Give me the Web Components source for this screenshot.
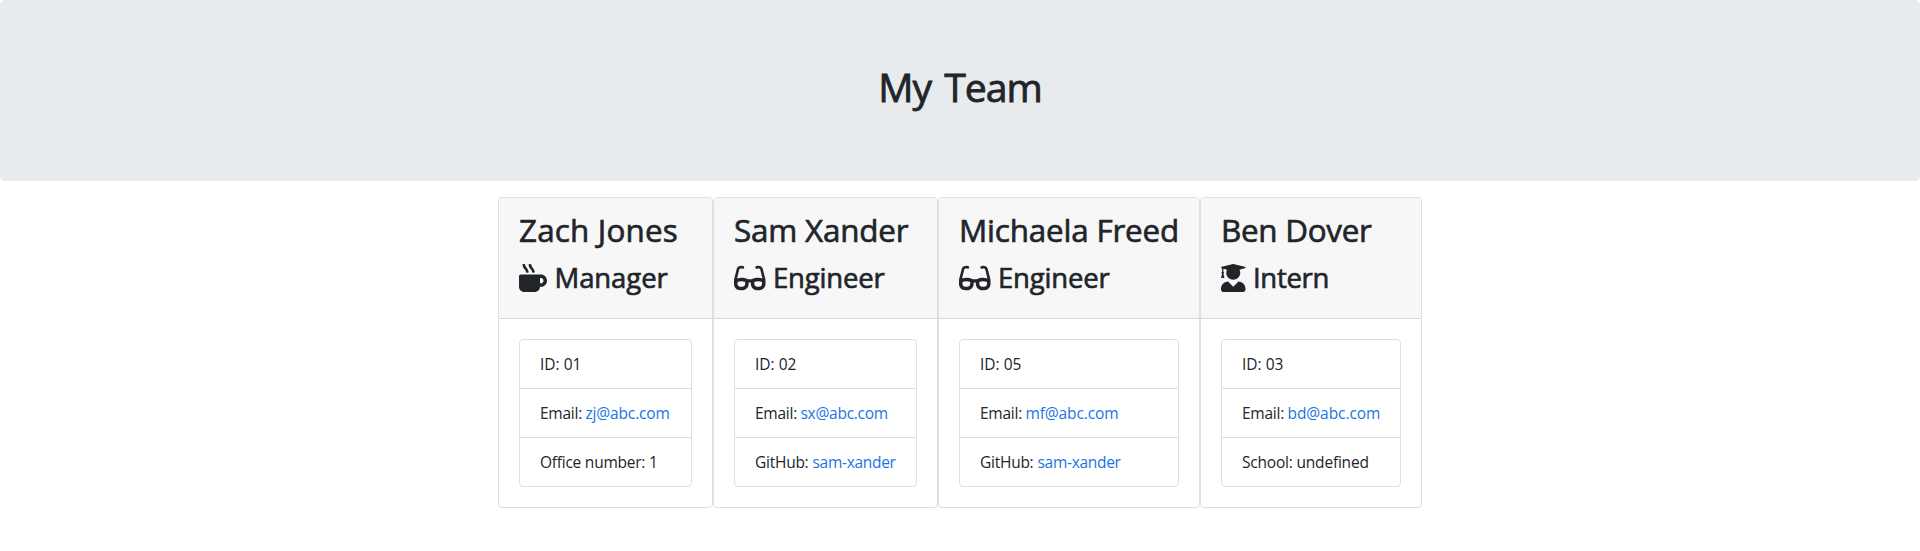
<!DOCTYPE html>
<html lang="en">
<head>
<meta charset="utf-8">
<title>My Team</title>
<style>
body{margin:0;background:#fff;color:#212529;font:400 15.5px/24px "Open Sans","Noto Sans",sans-serif}
</style>
</head>
<body>
<team-banner>My Team</team-banner>
<team-board>
  <member-card style="width:215px" icon="mug" name-spacing="0.2px" role-spacing="-0.09px">
    <span slot="name">Zach Jones</span><span slot="role">Manager</span>
    <info-row spacing="0px">ID: 01</info-row>
    <info-row label="Email:" label-width="45.5px" link spacing="-0.16px">zj@abc.com</info-row>
    <info-row spacing="-0.24px">Office number: 1</info-row>
  </member-card>
  <member-card style="width:225px" icon="glasses" name-spacing="-0.2px" role-spacing="-0.18px">
    <span slot="name">Sam Xander</span><span slot="role">Engineer</span>
    <info-row spacing="0px">ID: 02</info-row>
    <info-row label="Email:" label-width="45.5px" link spacing="-0.27px">sx@abc.com</info-row>
    <info-row label="GitHub:" label-width="57.5px" link spacing="-0.3px">sam-xander</info-row>
  </member-card>
  <member-card style="width:262px" icon="glasses" name-spacing="-0.18px" role-spacing="-0.18px">
    <span slot="name">Michaela Freed</span><span slot="role">Engineer</span>
    <info-row spacing="0px">ID: 05</info-row>
    <info-row label="Email:" label-width="45.5px" link spacing="-0.13px">mf@abc.com</info-row>
    <info-row label="GitHub:" label-width="57.5px" link spacing="-0.3px">sam-xander</info-row>
  </member-card>
  <member-card style="width:222px" icon="graduate" name-spacing="-0.28px" role-spacing="-0.31px">
    <span slot="name">Ben Dover</span><span slot="role">Intern</span>
    <info-row spacing="0px">ID: 03</info-row>
    <info-row label="Email:" label-width="45.5px" link spacing="-0.08px">bd@abc.com</info-row>
    <info-row spacing="-0.2px">School: undefined</info-row>
  </member-card>
</team-board>
<script>
const ICONS = {
  mug: [512, 'M127.1 146.5c1.3 7.7 8 13.5 16 13.5h16.5c9.8 0 17.6-8.5 16.3-18-3.8-28.2-16.4-54.2-36.6-74.7-14.4-14.7-23.6-33.3-26.4-53.5C111.8 5.9 105 0 96.8 0H80.4C70.6 0 63 8.5 64.1 18c3.9 31.9 18 61.3 40.6 84.4 12 12.2 19.7 27.5 22.4 44.1zm112 0c1.3 7.7 8 13.5 16 13.5h16.5c9.8 0 17.6-8.5 16.3-18-3.8-28.2-16.4-54.2-36.6-74.7-14.4-14.7-23.6-33.3-26.4-53.5C223.8 5.9 217 0 208.8 0h-16.4c-9.8 0-17.5 8.5-16.3 18 3.9 31.9 18 61.3 40.6 84.4 12 12.2 19.7 27.5 22.4 44.1zM400 192H32c-17.7 0-32 14.3-32 32v192c0 53 43 96 96 96h192c53 0 96-43 96-96h16c61.8 0 112-50.2 112-112s-50.2-112-112-112zm0 160h-16v-96h16c26.5 0 48 21.5 48 48s-21.5 48-48 48z'],
  glasses: [576, 'M574.1 280.37L528.75 98.66c-5.91-23.7-21.59-44.05-43-55.81-21.44-11.73-46.97-14.11-70.19-6.33l-15.25 5.08c-8.39 2.79-12.92 11.86-10.12 20.24l5.06 15.18c2.79 8.38 11.85 12.91 20.23 10.12l13.18-4.39c10.87-3.62 23-3.57 33.16 1.73 10.29 5.37 17.57 14.56 20.37 25.82l38.46 153.82c-22.19-6.81-49.79-12.46-81.2-12.46-34.77 0-73.98 7.02-114.85 26.74h-73.18c-40.87-19.74-80.08-26.75-114.86-26.75-31.42 0-59.02 5.65-81.21 12.46l38.46-153.83c2.79-11.25 10.09-20.45 20.38-25.81 10.16-5.3 22.28-5.35 33.15-1.73l13.17 4.39c8.38 2.79 17.44-1.74 20.23-10.12l5.06-15.18c2.8-8.38-1.73-17.45-10.12-20.24l-15.25-5.08c-23.22-7.78-48.75-5.41-70.19 6.33-21.41 11.77-37.09 32.11-43 55.8L1.9 280.37A64.218 64.218 0 0 0 0 295.86v70.25C0 429.01 51.58 480 115.2 480h37.12c60.28 0 110.37-45.94 114.88-105.37l2.93-38.63h35.75l2.93 38.63C313.31 434.06 363.4 480 423.68 480h37.12c63.62 0 115.2-50.99 115.2-113.88v-70.25c0-5.23-.64-10.43-1.9-15.5zm-370.72 89.42c-1.97 25.91-24.4 46.21-51.06 46.21H115.2C86.97 416 64 393.62 64 366.11v-37.54c18.12-6.49 43.42-12.92 72.58-12.92 23.86 0 47.26 4.33 69.93 12.92l-3.13 41.22zM512 366.12c0 27.51-22.97 49.88-51.2 49.88h-37.12c-26.67 0-49.1-20.3-51.06-46.21l-3.13-41.22c22.67-8.59 46.08-12.92 69.95-12.92 29.12 0 54.43 6.44 72.55 12.93v37.54z'],
  graduate: [448, 'M319.4 320.6L224 416l-95.4-95.4C57.1 323.7 0 382.2 0 454.4v9.6c0 26.5 21.5 48 48 48h352c26.5 0 48-21.5 48-48v-9.6c0-72.2-57.1-130.7-128.6-133.8zM13.6 79.8l6.4 1.5v58.4c-7 4.2-12 11.5-12 20.3 0 8.4 4.6 15.4 11.1 19.7L3.5 242c-1.7 6.9 2.1 14 7.6 14h41.8c5.5 0 9.3-7.1 7.6-14l-15.6-62.3C51.4 175.4 56 168.4 56 160c0-8.8-5-16.1-12-20.3V87.1l66 15.9c-8.6 17.2-14 36.4-14 57 0 70.7 57.3 128 128 128s128-57.3 128-128c0-20.6-5.3-39.8-14-57l96.3-23.2c18.2-4.4 18.2-27.1 0-31.5l-190.4-46c-13-3.1-26.7-3.1-39.7 0L13.6 48.2c-18.1 4.4-18.1 27.2 0 31.6z']
};

customElements.define('team-banner', class extends HTMLElement {
  constructor() {
    super();
    this.attachShadow({mode: 'open'}).innerHTML = `
      <style>
        :host{display:block;box-sizing:border-box;height:181px;padding-top:63px;margin-bottom:16px;background:#e7ebee;border-radius:5px;text-align:center}
        h1{margin:0;font-size:39.2px;line-height:48px;font-weight:500;letter-spacing:-1px;word-spacing:4px;-webkit-text-stroke:.8px}
      </style>
      <h1><slot></slot></h1>`;
  }
});

customElements.define('team-board', class extends HTMLElement {
  constructor() {
    super();
    this.attachShadow({mode: 'open'}).innerHTML = `
      <style>:host{display:flex;justify-content:center}</style><slot></slot>`;
  }
});

customElements.define('fa-icon', class extends HTMLElement {
  connectedCallback() {
    if (this.shadowRoot) return;
    const [w, d] = ICONS[this.getAttribute('name')];
    this.attachShadow({mode: 'open'}).innerHTML = `
      <style>:host{display:block;flex:none}svg{display:block;height:28px;width:${w / 512 * 28}px}</style>
      <svg viewBox="0 0 ${w} 512" fill="currentColor"><path d="${d}"/></svg>`;
  }
});

customElements.define('info-row', class extends HTMLElement {
  connectedCallback() {
    if (this.shadowRoot) return;
    const label = this.getAttribute('label');
    const tag = this.hasAttribute('link') ? 'a' : 'span';
    this.attachShadow({mode: 'open'}).innerHTML = `
      <style>
        :host{display:flex;padding:12px 0 12px 20px;height:24px;white-space:nowrap}
        :host(:not(:last-child)){border-bottom:1px solid #dfdfdf}
        .label{width:${this.getAttribute('label-width')};letter-spacing:-.25px}
        .value{letter-spacing:${this.getAttribute('spacing')}}
        a{color:#1b74e4;text-decoration:none}
      </style>
      ${label ? `<span class="label">${label}</span>` : ''}<${tag} class="value"><slot></slot></${tag}>`;
  }
});

customElements.define('member-card', class extends HTMLElement {
  connectedCallback() {
    if (this.shadowRoot) return;
    this.attachShadow({mode: 'open'}).innerHTML = `
      <style>
        :host{display:block;box-sizing:border-box;border:1px solid #dfdfdf;border-radius:4px;height:311px;overflow:hidden}
        header{box-sizing:border-box;height:121px;padding:13px 0 0 20px;background:#f7f7f7;border-bottom:1px solid #d8d8d8;white-space:nowrap}
        h2,h3{margin:0;font-weight:500;-webkit-text-stroke:.65px}
        h2{font-size:31.4px;line-height:38.4px;letter-spacing:${this.getAttribute('name-spacing')}}
        h3{display:flex;align-items:center;gap:7.5px;margin-top:12px;font-size:27.5px;line-height:33.6px;letter-spacing:${this.getAttribute('role-spacing')}}
        .body{padding:20px}
        .list{border:1px solid #dfdfdf;border-radius:4px}
      </style>
      <header>
        <h2><slot name="name"></slot></h2>
        <h3><fa-icon name="${this.getAttribute('icon')}"></fa-icon><slot name="role"></slot></h3>
      </header>
      <div class="body"><div class="list"><slot></slot></div></div>`;
  }
});
</script>
</body>
</html>
